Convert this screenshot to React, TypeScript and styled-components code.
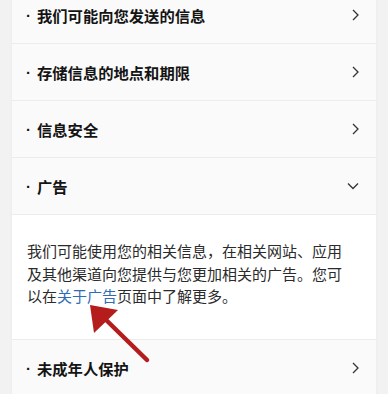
import React from 'react'
import styled, { createGlobalStyle } from 'styled-components'

const GlobalStyle = createGlobalStyle`
    html, body {
        margin: 0;
        padding: 0;
        background: #f2f2f2;
        font-family: "Noto Sans CJK SC", "Noto Sans", sans-serif;
    }
`

const Page = styled.div`
    position: relative;
    width: 388px;
    height: 394px;
    overflow: hidden;
    background: #f2f2f2;
`

const Card = styled.div`
    margin: -13px 12px 0 12px;
    background: #fafafa;
    box-shadow: 0 0 3px rgba(0, 0, 0, 0.05);
`

const Row = styled.div<{ last?: boolean }>`
    display: flex;
    align-items: center;
    justify-content: space-between;
    height: 57px;
    padding: 0 16px 0 14px;
    box-sizing: border-box;
    border-bottom: ${p => p.last ? 'none' : '1.5px solid #ececec'};
`

const Title = styled.span`
    display: flex;
    align-items: center;
    font-size: 15.3px;
    font-weight: 700;
    color: #141414;
`

const Dot = styled.span`
    font-family: "Liberation Sans", sans-serif;
    font-weight: 700;
    font-size: 15px;
    margin-right: 6px;
`

const Body = styled.div`
    background: #ffffff;
    padding: 25px 26px 31px 15px;
    border-bottom: 1.5px solid #ececec;
    font-size: 15px;
    line-height: 22.5px;
    color: #2b2b2b;
`

const Link = styled.span`
    color: #2f6cb3;
`

const Arrow = styled.svg`
    position: absolute;
    left: 0;
    top: 0;
    pointer-events: none;
`

const Chevron: React.FC<{ open?: boolean }> = ({ open }) =>
    open
        ? <svg width="14" height="10" viewBox="0 0 14 10">
            <path d="M2 2.5 L7 7.5 L12 2.5" fill="none" stroke="#333" strokeWidth="1.3" />
        </svg>
        : <svg width="10" height="14" viewBox="0 0 10 14">
            <path d="M3 2 L8 7 L3 12" fill="none" stroke="#333" strokeWidth="1.3" />
        </svg>

const items = [
    '我们可能向您发送的信息',
    '存储信息的地点和期限',
    '信息安全',
]

const App: React.FC = () =>
    <Page>
        <GlobalStyle />
        <Card>
            {items.map(t =>
                <Row key={t}>
                    <Title><Dot>·</Dot>{t}</Title>
                    <Chevron />
                </Row>
            )}
            <Row>
                <Title><Dot>·</Dot>广告</Title>
                <Chevron open />
            </Row>
            <Body>
                我们可能使用您的相关信息，在相关网站、应用及其他渠道向您提供与您更加相关的广告。您可以在<Link>关于广告</Link>页面中了解更多。
            </Body>
            <Row last>
                <Title><Dot>·</Dot>未成年人保护</Title>
                <Chevron />
            </Row>
        </Card>
        <Arrow width="388" height="394" viewBox="0 0 388 394">
            <line x1="147" y1="360" x2="100" y2="314" stroke="#b51c1c" strokeWidth="4.5" strokeLinecap="round" />
            <polygon points="90,305 118,310 94,333" fill="#b51c1c" />
        </Arrow>
    </Page>

export default App
